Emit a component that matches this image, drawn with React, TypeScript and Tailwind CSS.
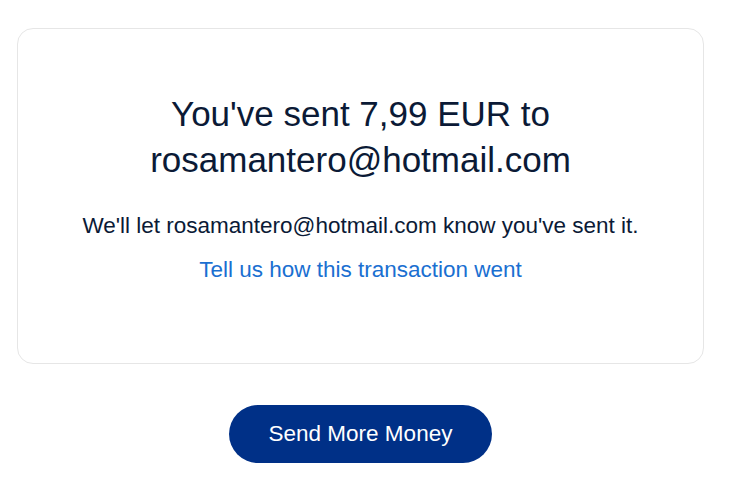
export default function App() {
  return (
    <div className="min-h-screen bg-white px-[17px] pt-[28px] font-['Liberation_Sans',Arial,sans-serif]">
      <div className="w-[687px]">
        <div className="rounded-[16px] border border-[#e6e6e6] px-4 pt-[62px] pb-[79px] text-center">
          <h1 className="text-[35px] leading-[46px] font-normal text-[#0b1a36]">
            You've sent 7,99 EUR to
            <br />
            rosamantero@hotmail.com
          </h1>
          <p className="mt-[29px] text-[22.5px] leading-[28px] text-[#0b1a36]">
            We'll let rosamantero@hotmail.com know you've sent it.
          </p>
          <a href="#" className="mt-[16px] block text-[22.5px] leading-[28px] text-[#1a6fd1]">
            Tell us how this transaction went
          </a>
        </div>
        <div className="mt-[41px] flex justify-center">
          <button className="h-[58px] w-[263px] rounded-full bg-[#003087] text-[22.5px] text-white">
            Send More Money
          </button>
        </div>
      </div>
    </div>
  );
}
